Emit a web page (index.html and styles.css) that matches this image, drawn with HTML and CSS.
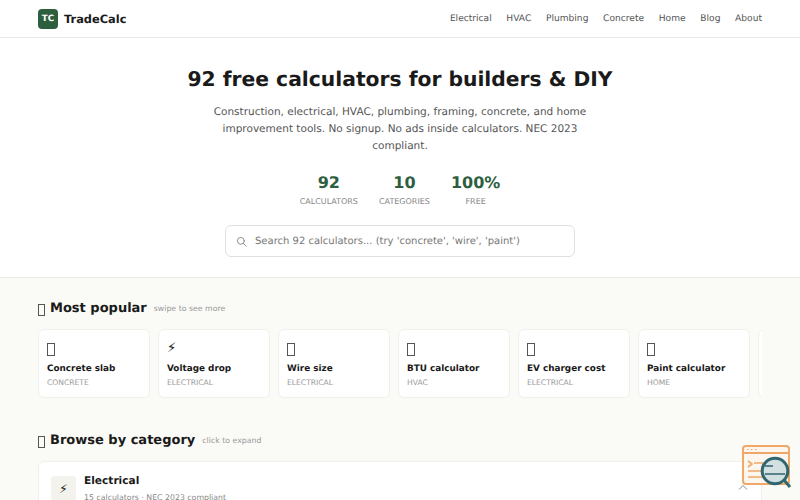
FILE: index.html
```html
<!DOCTYPE html>
<html lang="en">
<head>
<meta charset="utf-8">
<title>TradeCalc</title>
<link rel="stylesheet" href="styles.css">
</head>
<body>
<header class="topbar">
  <a class="brand"><span class="brand-mark">TC</span><span class="brand-name">TradeCalc</span></a>
  <nav class="nav">
    <a>Electrical</a><a>HVAC</a><a>Plumbing</a><a>Concrete</a><a>Home</a><a>Blog</a><a>About</a>
  </nav>
</header>
<section class="hero">
  <h1>92 free calculators for builders &amp; DIY</h1>
  <p class="lead">Construction, electrical, HVAC, plumbing, framing, concrete, and home improvement tools. No signup. No ads inside calculators. NEC 2023 compliant.</p>
  <div class="stats">
    <div class="stat"><b>92</b><span>Calculators</span></div>
    <div class="stat"><b>10</b><span>Categories</span></div>
    <div class="stat"><b>100%</b><span>Free</span></div>
  </div>
  <div class="search">
    <svg class="search-icon" width="11" height="11" viewBox="0 0 24 24" fill="none" stroke="#888" stroke-width="2" stroke-linecap="round"><circle cx="10.5" cy="10.5" r="7.5"/><path d="M16 16l6 6"/></svg>
    <span>Search 92 calculators... (try 'concrete', 'wire', 'paint')</span>
  </div>
</section>
<main class="content">
  <h2 class="section-title"><i class="tofu"></i><span>Most popular</span><small>swipe to see more</small></h2>
  <div class="popular">
    <a class="pop-card"><i class="pop-icon"><i class="tofu"></i></i><b>Concrete slab</b><span>Concrete</span></a>
    <a class="pop-card"><i class="pop-icon">⚡</i><b>Voltage drop</b><span>Electrical</span></a>
    <a class="pop-card"><i class="pop-icon"><i class="tofu"></i></i><b>Wire size</b><span>Electrical</span></a>
    <a class="pop-card"><i class="pop-icon"><i class="tofu"></i></i><b>BTU calculator</b><span>HVAC</span></a>
    <a class="pop-card"><i class="pop-icon"><i class="tofu"></i></i><b>EV charger cost</b><span>Electrical</span></a>
    <a class="pop-card"><i class="pop-icon"><i class="tofu"></i></i><b>Paint calculator</b><span>Home</span></a>
    <a class="pop-card"></a>
  </div>
  <h2 class="section-title browse"><i class="tofu"></i><span>Browse by category</span><small>click to expand</small></h2>
  <article class="category">
    <div class="cat-icon">⚡</div>
    <div class="cat-text"><h3>Electrical</h3><p>15 calculators · NEC 2023 compliant</p></div>
    <svg class="chev" width="12" height="8" viewBox="0 0 12 8" fill="none" stroke="#888" stroke-width="1"><path d="M2 6.500L6 2.500l4 4"/></svg>
  </article>
</main>
<svg class="badge" width="50" height="44" viewBox="0 0 50 44" fill="none">
  <rect x="1" y="1" width="46" height="38" rx="3" fill="#fcf6ee" stroke="#f0a868" stroke-width="2"/>
  <path d="M1 8h46" stroke="#f0a868" stroke-width="2"/>
  <path d="M5 4.500h1.500M9 4.500h1.500M13 4.500h1.500" stroke="#f0a868"/>
  <path d="M6 16l4 3-4 3M12 18h12M6 26h24M6 32h24" stroke="#f0a868" stroke-width="1.600"/>
  <circle cx="33" cy="26" r="12.800" fill="#d3e0e2" stroke="#2f6670" stroke-width="3"/>
  <path d="M23 21h8M23 29h20" stroke="#2f6670" stroke-width="1.600"/>
  <path d="M42 35l6 7" stroke="#2f6670" stroke-width="3"/>
</svg>
</body>
</html>
```
FILE: styles.css
```css
* { box-sizing: border-box; }
html, body { height: 100%; }
body {
  margin: 0;
  overflow: hidden;
  background: #fafaf6;
  color: #1a1a1a;
  font-family: "DejaVu Sans", sans-serif;
  text-rendering: geometricPrecision;
  position: relative;
}
.topbar {
  height: 38px;
  padding: 0 38px;
  display: flex;
  align-items: center;
  justify-content: space-between;
  background: #fff;
  border-bottom: 1px solid #eaeaea;
}
.brand { display: flex; align-items: center; gap: 6px; }
.brand-mark {
  width: 20px; height: 20px;
  border-radius: 4px;
  background: #2d5f3f;
  color: #fff;
  font-size: 8.750px; font-weight: 700;
  display: flex; align-items: center; justify-content: center;
}
.brand-name { font-size: 11.400px; font-weight: 700; }
.nav { display: flex; gap: 14.700px; font-size: 9.100px; color: #555; }
.hero {
  height: 240px;
  padding-top: 27px;
  background: #fff;
  border-bottom: 1px solid #eaeaea;
  display: flex;
  flex-direction: column;
  align-items: center;
  text-align: center;
}
h1 { margin: 0; font-size: 20.300px; line-height: 28px; font-weight: 700; }
.lead { margin: 11px 0 0; width: 400px; font-size: 10.500px; line-height: 17px; color: #555; }
.stats { display: flex; gap: 21px; margin-top: 18px; }
.stat { display: flex; flex-direction: column; align-items: center; }
.stat b { font-size: 16px; line-height: 20px; color: #2d5f3f; }
.stat span { margin-top: 3px; font-size: 8px; line-height: 12px; color: #888; text-transform: uppercase; }
.search {
  width: 350px; height: 32px;
  margin-top: 17px;
  padding: 0 10px;
  display: flex; align-items: center; gap: 8px;
  border: 1px solid #e0e0e0;
  border-radius: 6px;
  font-size: 10px;
  color: #777;
  text-align: left;
}
.search-icon { flex: none; }
.content { padding: 21px 38px 0; }
.section-title { margin: 0; display: flex; align-items: center; gap: 5px; font-size: 13px; line-height: 20px; font-weight: 700; }
.section-title small { margin-left: 2px; font-size: 7.800px; font-weight: 400; color: #999; }
.tofu { display: block; flex: none; width: 7px; height: 12px; border: 1px solid #555; }
.section-title .tofu { margin-top: 2px; }
.popular { display: flex; gap: 8px; margin-top: 10px; overflow: hidden; }
.pop-card {
  flex: none;
  width: 112px; height: 69px;
  padding: 12px 8px 0;
  background: #fff;
  border: 1px solid #f0f0ea;
  border-radius: 6px;
  display: flex; flex-direction: column;
}
.pop-icon { display: block; font-style: normal; font-size: 13px; line-height: 14px; height: 21px; }
.pop-icon .tofu { width: 8px; height: 13px; margin-top: 1px; }
.pop-card b { font-size: 8.850px; line-height: 13px; }
.pop-card span { font-size: 7.600px; line-height: 13px; color: #999; text-transform: uppercase; }
.browse { margin-top: 33px; }
.category {
  margin-top: 10px;
  height: 80px;
  padding: 12px 12px;
  background: #fff;
  border: 1px solid #f0f0ea;
  border-radius: 6px;
  display: flex; gap: 8px;
  position: relative;
}
.cat-icon { width: 25px; height: 25px; margin-top: 2px; border-radius: 4px; background: #f3f2ed; font-size: 12px; display: flex; align-items: center; justify-content: center; }
.cat-text h3 { margin: 0; font-size: 10.600px; line-height: 14px; font-weight: 700; }
.cat-text p { margin: 4px 0 0; font-size: 7.800px; line-height: 12px; color: #888; }
.chev { position: absolute; right: 12px; top: 21px; }
.badge { position: absolute; right: 8px; bottom: 11px; }
```
